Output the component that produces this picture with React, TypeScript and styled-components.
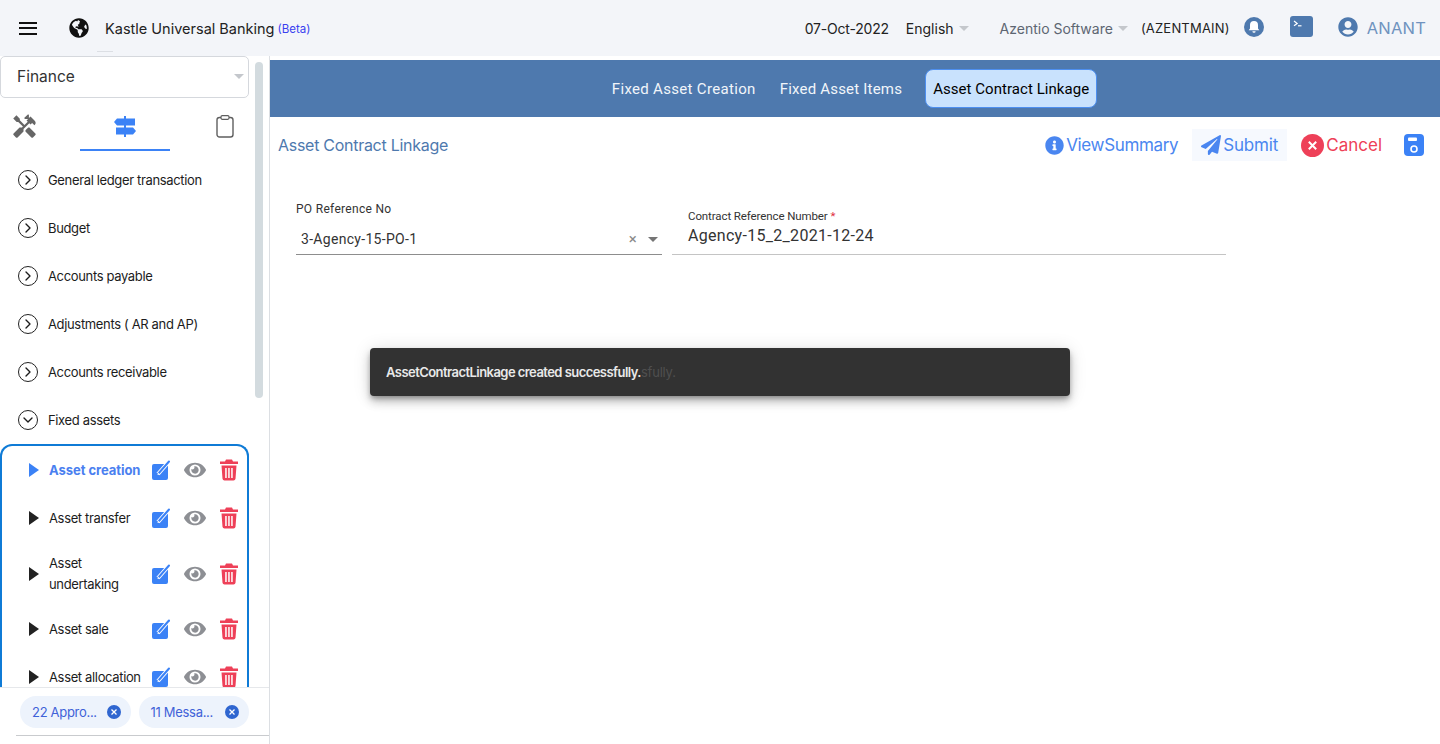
import React from 'react'
import styled, { createGlobalStyle } from 'styled-components'
import { FaGlobeAmericas, FaUserCircle, FaPaperPlane, FaInfoCircle, FaEye } from 'react-icons/fa'
import { MdHandyman } from 'react-icons/md'
import { ChevronRight, ChevronDown } from 'lucide-react'

const GlobalStyle = createGlobalStyle`
  html, body { margin: 0; padding: 0; background: #fff; }
  body { font-family: "Inter", "Liberation Sans", sans-serif; color: #222; overflow: hidden; }
  * { box-sizing: border-box; }
`

const Page = styled.div`
  position: relative;
  width: 1440px;
  height: 744px;
  overflow: hidden;
  display: flex;
  flex-direction: column;
`

const Header = styled.header`
  position: relative;
  height: 56px;
  flex: none;
  background: #f3f5f9;
  display: flex;
  align-items: center;
  padding: 0 14px 0 19px;
`

const HeaderTick = styled.span`
  position: absolute;
  left: 97px;
  top: 51px;
  width: 16px;
  height: 1px;
  background: #dcdfe4;
`

const Burger = styled.div`
  width: 18px;
  height: 13px;
  display: flex;
  flex-direction: column;
  justify-content: space-between;
  margin-right: 32px;
  i { display: block; height: 2px; background: #111; }
`

const AppName = styled.span`
  font-size: 14.5px;
  margin-left: 16px;
  color: #222;
`

const Beta = styled.span`
  font-size: 11.5px;
  color: #3a3ff0;
  margin-left: 3px;
  position: relative;
  top: 1px;
`

const Spacer = styled.div`
  flex: 1;
`

const HeadText = styled.span<{ $color?: string; $size?: number; $left?: number; $spacing?: number }>`
  font-size: ${p => p.$size ?? 14}px;
  color: ${p => p.$color ?? '#222'};
  margin-left: ${p => p.$left ?? 0}px;
  letter-spacing: ${p => p.$spacing ?? 0}px;
  white-space: nowrap;
`

const Caret = styled.span<{ $left?: number; $color?: string }>`
  display: inline-block;
  width: 0;
  height: 0;
  margin-left: ${p => p.$left ?? 5}px;
  border-left: 5px solid transparent;
  border-right: 5px solid transparent;
  border-top: 5px solid ${p => p.$color ?? '#c4c7cc'};
`

const Body = styled.div`
  flex: 1;
  display: flex;
  min-height: 0;
`

const Sidebar = styled.aside`
  position: relative;
  width: 270px;
  flex: none;
  border-right: 1px solid #dcdfe3;
  display: flex;
  flex-direction: column;
  min-height: 0;
`

const SideScroll = styled.div`
  flex: 1;
  min-height: 0;
  overflow: hidden;
  width: 249px;
`

const Thumb = styled.div`
  position: absolute;
  left: 255px;
  top: 6px;
  width: 8px;
  height: 336px;
  border-radius: 4px;
  background: #d3dbdf;
`

const ModuleSelect = styled.div`
  height: 42px;
  border: 1px solid #d5d8dd;
  border-radius: 5px;
  display: flex;
  align-items: center;
  justify-content: space-between;
  padding: 0 4px 2px 16px;
  font-size: 15.5px;
  color: #333;
`

const IconTabs = styled.div`
  display: grid;
  grid-template-columns: 80px 90px 79px;
  height: 53px;
  margin-bottom: 5px;
`

const IconTab = styled.div<{ $active?: boolean; $align?: string; $inset?: number }>`
  display: flex;
  align-items: center;
  justify-content: ${p => p.$align ?? 'center'};
  padding: 6px ${p => p.$inset ?? 0}px 0;
  color: ${p => (p.$active ? '#3b82f6' : '#666')};
  border-bottom: 2px solid ${p => (p.$active ? '#3b82f6' : 'transparent')};
`

const MenuRow = styled.div`
  height: 48px;
  display: flex;
  align-items: center;
  padding-left: 18px;
  font-size: 13px;
  color: #1c1c1c;
  letter-spacing: -0.35px;
`

const RoundChevron = styled.span`
  width: 20px;
  height: 20px;
  border-radius: 50%;
  border: 1.7px solid #222;
  display: flex;
  align-items: center;
  justify-content: center;
  margin-right: 10px;
  flex: none;
`

const SubMenu = styled.div`
  border: 2px solid #0f7bd6;
  border-bottom: none;
  border-radius: 12px 12px 0 0;
  height: 300px;
`

const SubRow = styled.div<{ $active?: boolean; $tall?: boolean }>`
  height: ${p => (p.$tall ? 63 : 48)}px;
  display: flex;
  align-items: center;
  padding-left: 27px;
  font-size: 13px;
  letter-spacing: ${p => (p.$active ? -0.05 : -0.35)}px;
  font-weight: ${p => (p.$active ? 700 : 400)};
  color: ${p => (p.$active ? '#4a7ff0' : '#1c1c1c')};
`

const Triangle = styled.span<{ $active?: boolean }>`
  width: 0;
  height: 0;
  flex: none;
  border-top: 7px solid transparent;
  border-bottom: 7px solid transparent;
  border-left: 10px solid ${p => (p.$active ? '#3b82f6' : '#222')};
  margin-right: 10px;
`

const SubLabel = styled.span`
  width: 102px;
  flex: none;
  line-height: 21px;
`

const RowIcons = styled.span`
  display: flex;
  align-items: center;
  gap: 12.5px;
  flex: none;
`

const SideFooter = styled.div`
  height: 57px;
  flex: none;
  border-top: 1px solid #e6e8eb;
  padding: 8px 0 0 16px;
`

const Chips = styled.div`
  display: flex;
  gap: 8px;
  padding-left: 4px;
`

const Chip = styled.div`
  width: 110.5px;
  height: 32px;
  border-radius: 16px;
  background: #edf3fc;
  display: flex;
  align-items: center;
  justify-content: space-between;
  padding: 0 10px 0 12px;
  font-size: 13px;
  letter-spacing: -0.3px;
  color: #3f62d8;
`

const ChipClose = styled.span`
  width: 14px;
  height: 14px;
  border-radius: 50%;
  background: #2f66d0;
  color: #fff;
  display: flex;
  align-items: center;
  justify-content: center;
`

const FooterLine = styled.div`
  height: 1px;
  background: #c9cbce;
  margin-top: 7px;
`

const Main = styled.main`
  flex: 1;
  min-width: 0;
  padding-top: 4px;
`

const TabBar = styled.nav`
  height: 57px;
  background: #4e79ae;
  display: flex;
  align-items: center;
  justify-content: center;
  gap: 8px;
  padding-right: 9px;
  font-family: "Roboto", "Liberation Sans", sans-serif;
`

const Tab = styled.div<{ $active?: boolean; $spacing: number }>`
  height: 39px;
  padding: 0 7px;
  margin-left: ${p => (p.$active ? 7 : 0)}px;
  display: flex;
  align-items: center;
  font-size: 15px;
  letter-spacing: ${p => p.$spacing}px;
  border-radius: 8px;
  color: ${p => (p.$active ? '#000' : '#f1f5fa')};
  background: ${p => (p.$active ? '#c9e2fd' : 'transparent')};
  border: 1px solid ${p => (p.$active ? '#4d8ff0' : 'transparent')};
`

const TitleRow = styled.div`
  height: 57px;
  display: flex;
  align-items: center;
  padding: 0 15px 1px 8px;
`

const PageTitle = styled.h1`
  margin: 0;
  flex: 1;
  padding-bottom: 1px;
  font-size: 16px;
  font-weight: 400;
  letter-spacing: -0.28px;
  color: #4e79ae;
`

const ActionBtn = styled.div<{ $color: string; $boxed?: boolean; $left?: number; $spacing?: number }>`
  display: flex;
  align-items: center;
  gap: 2px;
  height: 32px;
  margin-left: ${p => p.$left ?? 0}px;
  padding: 0 ${p => (p.$boxed ? 9 : 0)}px;
  font-size: 17px;
  letter-spacing: ${p => p.$spacing ?? 0}px;
  color: ${p => p.$color};
  background: ${p => (p.$boxed ? '#f6f9fe' : 'transparent')};
`

const FormRow = styled.div`
  display: flex;
  gap: 10px;
  padding: 28px 0 0 26px;
  font-family: "Roboto", "Liberation Sans", sans-serif;
`

const Field = styled.div<{ $w: number }>`
  width: ${p => p.$w}px;
  height: 53px;
  display: flex;
  flex-direction: column;
`

const FieldLabel = styled.label<{ $top: number; $indent: number; $size: number; $spacing: number }>`
  font-size: ${p => p.$size}px;
  color: #333;
  padding: ${p => p.$top}px 0 0 ${p => p.$indent}px;
  line-height: 14px;
  letter-spacing: ${p => p.$spacing}px;
  span { color: #e0313e; }
`

const FieldValue = styled.div<{ $dark?: boolean; $indent: number; $top: number; $bottom: number; $size: number }>`
  flex: 1;
  display: flex;
  align-items: center;
  justify-content: space-between;
  padding: ${p => p.$top}px 4px ${p => p.$bottom}px ${p => p.$indent}px;
  font-size: ${p => p.$size}px;
  letter-spacing: 0.3px;
  color: #333;
  border-bottom: 1px solid ${p => (p.$dark ? '#8d8d8d' : '#c4c4c4')};
`

const ClearGroup = styled.span`
  display: flex;
  align-items: center;
  gap: 11px;
  color: #8a8a8a;
  font-size: 15px;
`

const Toast = styled.div`
  position: absolute;
  left: 370px;
  top: 348px;
  width: 700px;
  height: 48px;
  border-radius: 4px;
  background: #323232;
  box-shadow: 0 3px 5px -1px rgba(0,0,0,.3), 0 6px 10px rgba(0,0,0,.2), 0 1px 18px rgba(0,0,0,.12);
  display: flex;
  align-items: center;
  padding-left: 16px;
  font-size: 13px;
  font-weight: 600;
  letter-spacing: -0.55px;
  color: #e9e9e9;
`

const Ghost = styled.span`
  color: #4f4f4f;
  font-weight: 400;
  letter-spacing: -0.2px;
`

const EditIcon = () => (
  <svg width="20" height="22" viewBox="0 0 20 22">
    <rect x="1" y="5" width="16" height="16" rx="2" fill="#3b82f6" />
    <path d="M7 15 L18 2.5" stroke="#fff" strokeWidth="4" />
    <path d="M7 15 L18 2.5" stroke="#3b82f6" strokeWidth="2" strokeLinecap="round" />
    <path d="M6.5 16 L7 13.5 L9 15.5 Z" fill="#fff" />
  </svg>
)

const TrashIcon = () => (
  <svg width="20" height="22" viewBox="-2 0 20 22" fill="#ee4058">
    <path d="M6 .5h6l1 2h5v2.4H0V2.5h5z" />
    <path d="M1.5 6.5h15l-1 13.3a2 2 0 0 1-2 1.7h-9a2 2 0 0 1-2-1.7zM5.2 9v10h1.5V9zm3 0v10h1.5V9zm3 0v10h1.5V9z" fillRule="evenodd" />
  </svg>
)

const SaveIcon = () => (
  <svg width="22" height="24" viewBox="0 0 22 24">
    <rect x="1" y="1" width="20" height="22" rx="4" fill="#3b82f6" />
    <rect x="5" y="4.5" width="9" height="3.5" rx="1" fill="#fff" />
    <circle cx="11" cy="16" r="3" fill="none" stroke="#fff" strokeWidth="1.6" />
  </svg>
)

const BellIcon = () => (
  <svg width="20" height="20" viewBox="0 0 20 20">
    <circle cx="10" cy="10" r="10" fill="#4e79ae" />
    <path d="M10 4a4 4 0 0 1 4 4v3.5l1.3 1.8H4.7L6 11.5V8a4 4 0 0 1 4-4z" fill="#fff" />
    <path d="M8.4 14.2h3.2a1.6 1.6 0 0 1-3.2 0z" fill="#fff" />
  </svg>
)

const TerminalIcon = () => (
  <svg width="23" height="21" viewBox="0 0 23 21">
    <rect width="23" height="21" rx="3" fill="#4e79ae" />
    <path d="M4 5l3.2 2.4L4 9.8" fill="none" stroke="#fff" strokeWidth="1.2" />
    <path d="M8 9.8h3.5" stroke="#fff" strokeWidth="1.2" />
  </svg>
)

const CancelIcon = () => (
  <svg width="23" height="23" viewBox="0 0 23 23">
    <circle cx="11.5" cy="11.5" r="11.5" fill="#ee4058" />
    <path d="M7.8 7.8l7.4 7.4M15.2 7.8l-7.4 7.4" stroke="#fff" strokeWidth="2" />
  </svg>
)

const ClipboardIcon = () => (
  <svg width="18" height="23" viewBox="0 0 18 23" fill="none" stroke="#5f5f5f">
    <rect x="1" y="2.5" width="16" height="19.5" rx="2.5" strokeWidth="1.4" />
    <rect x="5" y=".7" width="8" height="3.6" rx="1.2" fill="#fff" strokeWidth="1.2" />
  </svg>
)

const SignsIcon = () => (
  <svg width="22" height="21" viewBox="0 0 22 21" fill="currentColor">
    <rect x="10" width="2" height="21" />
    <path d="M3 2.5h18v7H3L0 6z" />
    <path d="M2 11.5h17l3 3.5-3 3.5H2z" />
  </svg>
)

const ChipX = () => (
  <svg width="8" height="8" viewBox="0 0 8 8">
    <path d="M1.5 1.5l5 5M6.5 1.5l-5 5" stroke="#fff" strokeWidth="1.3" />
  </svg>
)

const SubItem = ({ label, active, tall }: { label: string; active?: boolean; tall?: boolean }) => (
  <SubRow $active={active} $tall={tall}>
    <Triangle $active={active} />
    <SubLabel>{label}</SubLabel>
    <RowIcons>
      <EditIcon />
      <FaEye size={22} color="#8d8f94" />
      <TrashIcon />
    </RowIcons>
  </SubRow>
)

const menu = ['General ledger transaction', 'Budget', 'Accounts payable', 'Adjustments ( AR and AP)', 'Accounts receivable']

export default function App() {
  return (
    <Page>
      <GlobalStyle />
      <Header>
        <Burger><i /><i /><i /></Burger>
        <FaGlobeAmericas size={20} color="#111" />
        <AppName>Kastle Universal Banking</AppName>
        <Beta>(Beta)</Beta>
        <HeaderTick />
        <Spacer />
        <HeadText $spacing={-0.2}>07-Oct-2022</HeadText>
        <HeadText $left={17}>English</HeadText>
        <Caret />
        <HeadText $color="#5d6672" $left={31}>Azentio Software</HeadText>
        <Caret />
        <HeadText $size={13} $left={13} $spacing={0.2}>(AZENTMAIN)</HeadText>
        <HeadText $left={14}><BellIcon /></HeadText>
        <HeadText $left={26}><TerminalIcon /></HeadText>
        <HeadText $left={25}><FaUserCircle size={20} color="#4e79ae" /></HeadText>
        <HeadText $size={16.5} $color="#6f93bf" $left={9} $spacing={0.2}>ANANT</HeadText>
      </Header>
      <Body>
        <Sidebar>
          <Thumb />
          <SideScroll>
            <ModuleSelect>
              Finance
              <Caret $left={0} />
            </ModuleSelect>
            <IconTabs>
              <IconTab $align="flex-start" $inset={11}><MdHandyman size={27} /></IconTab>
              <IconTab $active><SignsIcon /></IconTab>
              <IconTab $align="flex-end" $inset={15}><ClipboardIcon /></IconTab>
            </IconTabs>
            {menu.map(item => (
              <MenuRow key={item}>
                <RoundChevron><ChevronRight size={16} strokeWidth={2} /></RoundChevron>
                {item}
              </MenuRow>
            ))}
            <MenuRow>
              <RoundChevron><ChevronDown size={16} strokeWidth={2} /></RoundChevron>
              Fixed assets
            </MenuRow>
            <SubMenu>
              <SubItem label="Asset creation" active />
              <SubItem label="Asset transfer" />
              <SubItem label="Asset undertaking" tall />
              <SubItem label="Asset sale" />
              <SubItem label="Asset allocation" />
            </SubMenu>
          </SideScroll>
          <SideFooter>
            <Chips>
              <Chip>22 Appro...<ChipClose><ChipX /></ChipClose></Chip>
              <Chip>11 Messa...<ChipClose><ChipX /></ChipClose></Chip>
            </Chips>
            <FooterLine />
          </SideFooter>
        </Sidebar>
        <Main>
          <TabBar>
            <Tab $spacing={0.32}>Fixed Asset Creation</Tab>
            <Tab $spacing={0.2}>Fixed Asset Items</Tab>
            <Tab $active $spacing={0.05}>Asset Contract Linkage</Tab>
          </TabBar>
          <TitleRow>
            <PageTitle>Asset Contract Linkage</PageTitle>
            <ActionBtn $color="#4a86f0" $spacing={-0.35}><FaInfoCircle size={19} />ViewSummary</ActionBtn>
            <ActionBtn $color="#4a86f0" $boxed $left={14} $spacing={-0.15}><FaPaperPlane size={20} />Submit</ActionBtn>
            <ActionBtn $color="#ee4058" $left={14}><CancelIcon />Cancel</ActionBtn>
            <ActionBtn $color="#4a86f0" $left={21}><SaveIcon /></ActionBtn>
          </TitleRow>
          <FormRow>
            <Field $w={366}>
              <FieldLabel $top={0} $indent={0} $size={12} $spacing={0.3}>PO Reference No</FieldLabel>
              <FieldValue $dark $indent={5} $top={8} $bottom={0} $size={14}>
                3-Agency-15-PO-1
                <ClearGroup>×<Caret $left={0} $color="#757575" /></ClearGroup>
              </FieldValue>
            </Field>
            <Field $w={554}>
              <FieldLabel $top={7} $indent={16} $size={11.5} $spacing={-0.1}>Contract Reference Number <span>*</span></FieldLabel>
              <FieldValue $indent={16} $top={0} $bottom={7} $size={16}>Agency-15_2_2021-12-24</FieldValue>
            </Field>
          </FormRow>
        </Main>
      </Body>
      <Toast>AssetContractLinkage created successfully.<Ghost>sfully.</Ghost></Toast>
    </Page>
  )
}
